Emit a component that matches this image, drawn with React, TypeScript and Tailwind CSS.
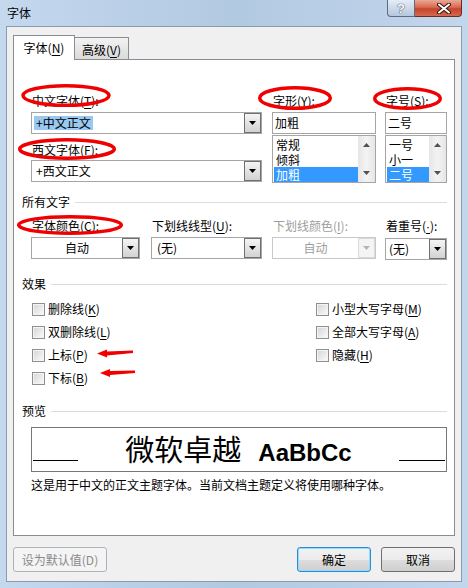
import type { ReactNode } from 'react'

// accelerator letter, underlined like the Windows dialog
const U = ({ children }: { children: ReactNode }) => (
  <span className="underline decoration-1 underline-offset-[2px]">{children}</span>
)

function Tri({ up, color = '#000' }: { up?: boolean; color?: string }) {
  return (
    <svg width="7" height="4" viewBox="0 0 7 4">
      <path d={up ? 'M0 4h7L3.5 0z' : 'M0 0h7L3.5 4z'} fill={color} />
    </svg>
  )
}

function DropButton({ disabled }: { disabled?: boolean }) {
  return (
    <div
      className={
        disabled
          ? 'flex h-full w-[17px] items-center justify-center border border-[#dadada] bg-[#f4f4f4]'
          : 'flex h-full w-[17px] items-center justify-center border border-[#707070] bg-linear-to-b from-[#f5f5f5] to-[#d2d2d2]'
      }
    >
      <Tri color={disabled ? '#b4b4b4' : '#000'} />
    </div>
  )
}

function Combo({ children, disabled, className = '' }: { children?: ReactNode; disabled?: boolean; className?: string }) {
  return (
    <div
      className={`flex h-[22px] items-center border bg-white ${disabled ? 'border-[#c8c8c8]' : 'border-[#a5a5a5]'} ${className}`}
    >
      <div className="min-w-0 flex-1 whitespace-nowrap">{children}</div>
      <DropButton disabled={disabled} />
    </div>
  )
}

function ListBox({ items, selected }: { items: string[]; selected: number }) {
  return (
    <div className="mt-px flex h-[48px] border border-[#a5a5a5] bg-white">
      <div className="flex-1 pl-px pt-px">
        {items.map((it, i) => (
          <div
            key={it}
            className={`flex h-[15px] items-center overflow-hidden pl-[2px] leading-[13px] ${i === selected ? 'bg-[#3399ff] text-white' : ''}`}
          >
            {it}
          </div>
        ))}
      </div>
      <div className="flex w-[17px] flex-col items-center justify-between bg-linear-to-r from-[#e6e6e6] via-[#f3f3f3] to-[#e6e6e6] py-[7px]">
        <Tri up color="#505050" />
        <Tri color="#505050" />
      </div>
    </div>
  )
}

function Section({ title }: { title: string }) {
  return (
    <div className="flex h-4 items-center">
      <span>{title}</span>
      <div className="ml-[5px] h-px flex-1 bg-[#d5dee7]" />
    </div>
  )
}

function Check({ children }: { children: ReactNode }) {
  return (
    <div className="flex h-4 items-center">
      <span className="h-[13px] w-[13px] border border-[#8e8f8f] bg-[#f4f4f4] p-px">
        <span className="block h-full w-full bg-linear-to-br from-[#d8d8d8] to-[#f8f8f8]" />
      </span>
      <span className="ml-[3px]">{children}</span>
    </div>
  )
}

const btn =
  'h-[25px] w-[74px] rounded-[3px] border bg-[linear-gradient(#f2f2f2,#ebebeb_50%,#dddddd_50%,#cfcfcf)] text-[12px] leading-4'

export default function App() {
  return (
    <div className="relative h-[588px] w-[468px] overflow-hidden bg-linear-to-r from-[#c4d8ee] via-[#b2c9e2] to-[#c2d6ec] font-['Noto_Sans_CJK_SC',sans-serif] text-[12px] leading-4 text-black">
      {/* title bar */}
      <div className="flex h-[26px] items-start justify-between">
        <span className="ml-[7px] mt-[5px]">字体</span>
        <div className="mr-[6px] flex">
          <div className="flex h-[17px] w-[28px] items-center justify-center rounded-bl-[4px] border border-t-0 border-[#5b6c83] bg-linear-to-b from-[#e4ecf6] to-[#b5c7dc] font-['Liberation_Sans',sans-serif] text-[13px] font-bold leading-none text-white [text-shadow:0_0_1px_#2c3a4c,0_0_1px_#2c3a4c]">
            ?
          </div>
          <div className="flex h-[17px] w-[47px] items-center justify-center rounded-br-[4px] border border-l-0 border-t-0 border-[#6e2a22] bg-[linear-gradient(#eba896,#d86a50_45%,#c5442c_55%,#d4694f)] pl-[12px]">
            <svg width="14" height="11" viewBox="0 0 14 11">
              <path d="M2 1.5l10 8M12 1.5l-10 8" stroke="#3a1510" strokeWidth="4" strokeLinecap="round" />
              <path d="M2 1.5l10 8M12 1.5l-10 8" stroke="#fff" strokeWidth="2" strokeLinecap="round" />
            </svg>
          </div>
        </div>
      </div>

      {/* client area */}
      <div className="mx-[6px] flex h-[556px] flex-col border border-[#8a9ab0] bg-[#f0f0f0] px-[6px]">
        {/* tabs */}
        <div className="relative z-10 -mb-px flex h-[33px] items-end">
          <div className="flex h-[25px] w-[62px] items-center justify-center border border-b-0 border-[#898c95] bg-white pb-px">
            字体(<U>N</U>)
          </div>
          <div className="-ml-px mb-px flex h-[22px] w-[55px] items-center justify-center border border-b-0 border-[#898c95] bg-linear-to-b from-[#f3f3f3] to-[#dadada] pt-[2px]">
            高级(<U>V</U>)
          </div>
        </div>

        {/* tab page */}
        <div className="flex h-[477px] w-[442px] flex-col border border-[#898c95] bg-white pl-[8px] pr-[7px]">
          {/* fonts */}
          <div className="ml-[9px] mt-[33px] flex">
            <div className="w-[231px]">
              <div className="pl-px">
                中文字体(<U>T</U>):
              </div>
              <Combo className="mt-[3px]">
                <span className="ml-[2px] inline-block bg-[#99c9f0] px-[2px] leading-[14px]">+中文正文</span>
              </Combo>
              <div className="mt-[8px] pl-px">
                西文字体(<U>F</U>):
              </div>
              <Combo className="mt-[2px]">
                <span className="ml-[2px] inline-block px-[2px] leading-[14px]">+西文正文</span>
              </Combo>
            </div>
            <div className="ml-[10px] w-[104px]">
              <div className="pl-px">
                字形(<U>Y</U>):
              </div>
              <div className="mt-[3px] flex h-[22px] items-center border border-[#a5a5a5] bg-white pl-[2px]">加粗</div>
              <ListBox items={['常规', '倾斜', '加粗']} selected={2} />
            </div>
            <div className="ml-[9px] w-[62px]">
              <div className="pl-px">
                字号(<U>S</U>):
              </div>
              <div className="mt-[3px] flex h-[22px] items-center border border-[#a5a5a5] bg-white pl-[2px]">二号</div>
              <ListBox items={['一号', '小一', '二号']} selected={2} />
            </div>
          </div>

          {/* all text */}
          <div className="mt-[11px]">
            <Section title="所有文字" />
          </div>
          <div className="ml-[9px] mt-[8px] flex">
            <div className="w-[109px]">
              <div className="pl-px">
                字体颜色(<U>C</U>):
              </div>
              <Combo className="mt-[3px]">
                <div className="text-center">自动</div>
              </Combo>
            </div>
            <div className="ml-[11px] w-[111px]">
              <div className="pl-px">
                下划线线型(<U>U</U>):
              </div>
              <Combo className="mt-[3px]">
                <div className="pl-[5px]">(无)</div>
              </Combo>
            </div>
            <div className="ml-[10px] w-[104px]">
              <div className="pl-px text-[#9d9d9d]">
                下划线颜色(<U>I</U>):
              </div>
              <Combo disabled className="mt-[3px]">
                <div className="text-center text-[#9d9d9d]">自动</div>
              </Combo>
            </div>
            <div className="ml-[9px] w-[62px]">
              <div className="pl-px">
                着重号(<span className="font-['Liberation_Sans',sans-serif] underline decoration-1 underline-offset-[2px]">·</span>):
              </div>
              <Combo className="mt-[3px]">
                <div className="pl-[3px]">(无)</div>
              </Combo>
            </div>
          </div>

          {/* effects */}
          <div className="mt-[16px]">
            <Section title="效果" />
          </div>
          <div className="ml-[10px] mt-[9px] flex">
            <div className="flex w-[284px] flex-col gap-[7px]">
              <Check>
                删除线(<U>K</U>)
              </Check>
              <Check>
                双删除线(<U>L</U>)
              </Check>
              <Check>
                上标(<U>P</U>)
              </Check>
              <Check>
                下标(<U>B</U>)
              </Check>
            </div>
            <div className="flex flex-col gap-[7px]">
              <Check>
                小型大写字母(<U>M</U>)
              </Check>
              <Check>
                全部大写字母(<U>A</U>)
              </Check>
              <Check>
                隐藏(<U>H</U>)
              </Check>
            </div>
          </div>

          {/* preview */}
          <div className="mt-[17px]">
            <Section title="预览" />
          </div>
          <div className="ml-[9px] mt-[8px] flex h-[45px] items-center border border-[#777777] px-px">
            <div className="mb-[10px] h-px w-[45px] self-end bg-black" />
            <div className="flex flex-1 items-baseline justify-center whitespace-nowrap">
              <span className="text-[29px] font-normal leading-none">微软卓越</span>
              <span className="ml-[17px] font-['Liberation_Sans',sans-serif] text-[24px] font-bold leading-none">
                AaBbCc
              </span>
            </div>
            <div className="mb-[10px] h-px w-[46px] self-end bg-black" />
          </div>
          <div className="ml-[9px] mt-[5px]">这是用于中文的正文主题字体。当前文档主题定义将使用哪种字体。</div>
        </div>

        {/* buttons */}
        <div className="mt-[11px] flex">
          <button className="h-[25px] w-[94px] rounded-[3px] border border-[#b0b4b8] bg-[#f4f4f4] text-[12px] leading-4 text-[#8a8a8a]">
            设为默认值(D)
          </button>
          <div className="flex-1" />
          <button className={`${btn} border-[#2f8ad6] shadow-[inset_0_0_0_1px_#8fdcfb]`}>确定</button>
          <button className={`${btn} ml-[10px] border-[#707070]`}>取消</button>
        </div>
      </div>

      {/* red annotations */}
      <svg className="pointer-events-none absolute left-0 top-0" width="468" height="588" viewBox="0 0 468 588">
        <g fill="none" stroke="#f00000" strokeWidth="3.5">
          <ellipse cx="66" cy="95.5" rx="43" ry="9.8" />
          <ellipse cx="67" cy="149" rx="47.3" ry="9.3" />
          <ellipse cx="295" cy="98" rx="35.3" ry="10.3" />
          <ellipse cx="407.5" cy="98.5" rx="32.8" ry="9.8" />
          <ellipse cx="70" cy="225" rx="51.3" ry="8.3" />
        </g>
        <g fill="#f00000">
          <path d="M97 353.5L107 349.5L107 351.5L133 350.5L133 353L107 355.5L107 357.5Z" />
          <path d="M100 373L110 369L110 371L135 370.5L135 373L110 375L110 377Z" />
        </g>
      </svg>
    </div>
  )
}
